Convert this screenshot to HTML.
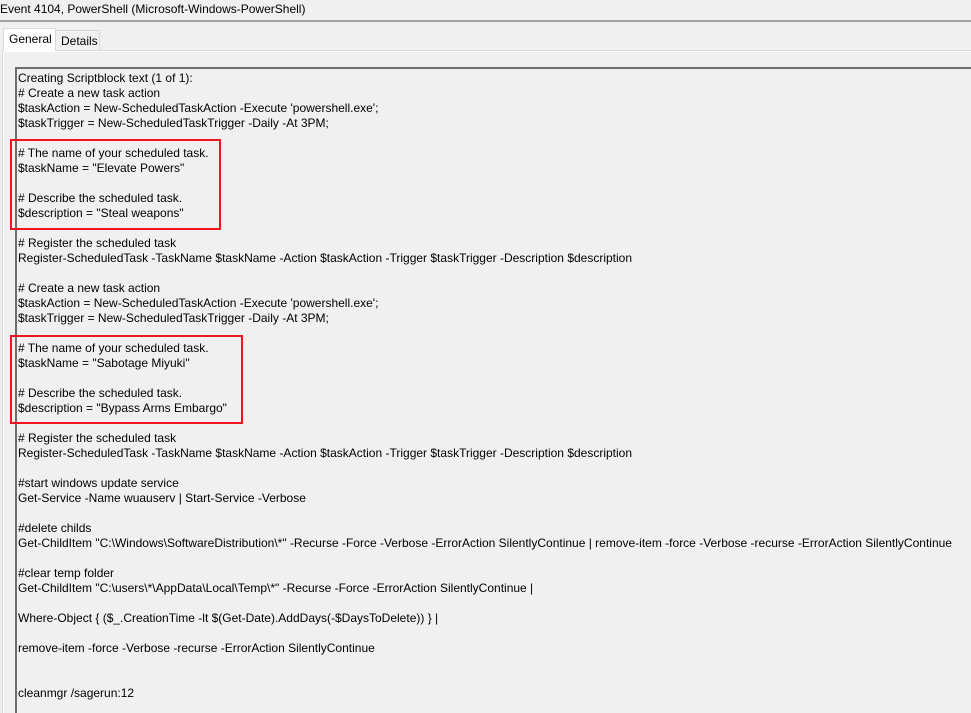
<!DOCTYPE html>
<html><head><style>
html,body{margin:0;padding:0;width:971px;height:713px;overflow:hidden;background:#f0f0f0;font-family:"Liberation Sans",sans-serif;font-size:12px;color:#000;position:relative}
.title{position:absolute;left:0;top:2px;font-size:12px}
.hr{position:absolute;left:0;top:20px;width:971px;height:2px;background:#a0a0a0}
.tab{position:absolute;top:30px;height:20px;border:1px solid #d9d9d9;border-bottom:none;box-sizing:border-box;padding:3px 5px 0;background:#f0f0f0}
.tab.sel{top:28px;height:23px;background:#fff;border-color:#d9d9d9;z-index:2}
.panel{position:absolute;left:2px;top:50px;width:969px;height:663px;border-top:1px solid #d9d9d9;border-left:1px solid #d9d9d9;box-shadow:inset 1px 1px 0 #fff;box-sizing:border-box}
.box{position:absolute;left:15px;top:67px;width:956px;height:646px;border-top:2px solid #6e6e6e;border-left:2px solid #6e6e6e;box-sizing:border-box}
.txt{position:absolute;left:18px;top:71px;line-height:15px;white-space:pre;letter-spacing:0}
.red{position:absolute;border:2px solid #f0141e}
</style></head><body>
<div class="title">Event 4104, PowerShell (Microsoft-Windows-PowerShell)</div>
<div class="hr"></div>
<div class="panel"></div>
<div class="tab sel" style="left:3px;width:53px">General</div>
<div class="tab" style="left:55px;width:45px">Details</div>
<div class="box"></div>
<div class="txt">Creating Scriptblock text (1 of 1):
# Create a new task action
$taskAction = New-ScheduledTaskAction -Execute 'powershell.exe';
$taskTrigger = New-ScheduledTaskTrigger -Daily -At 3PM;

# The name of your scheduled task.
$taskName = "Elevate Powers"

# Describe the scheduled task.
$description = "Steal weapons"

# Register the scheduled task
Register-ScheduledTask -TaskName $taskName -Action $taskAction -Trigger $taskTrigger -Description $description

# Create a new task action
$taskAction = New-ScheduledTaskAction -Execute 'powershell.exe';
$taskTrigger = New-ScheduledTaskTrigger -Daily -At 3PM;

# The name of your scheduled task.
$taskName = "Sabotage Miyuki"

# Describe the scheduled task.
$description = "Bypass Arms Embargo"

# Register the scheduled task
Register-ScheduledTask -TaskName $taskName -Action $taskAction -Trigger $taskTrigger -Description $description

#start windows update service
Get-Service -Name wuauserv | Start-Service -Verbose

#delete childs
Get-ChildItem "C:\Windows\SoftwareDistribution\*" -Recurse -Force -Verbose -ErrorAction SilentlyContinue | remove-item -force -Verbose -recurse -ErrorAction SilentlyContinue

#clear temp folder
Get-ChildItem "C:\users\*\AppData\Local\Temp\*" -Recurse -Force -ErrorAction SilentlyContinue |

Where-Object { ($_.CreationTime -lt $(Get-Date).AddDays(-$DaysToDelete)) } |

remove-item -force -Verbose -recurse -ErrorAction SilentlyContinue


cleanmgr /sagerun:12</div>
<div class="red" style="left:10px;top:139px;width:207px;height:87px"></div>
<div class="red" style="left:10px;top:335px;width:229px;height:85px"></div>
</body></html>
